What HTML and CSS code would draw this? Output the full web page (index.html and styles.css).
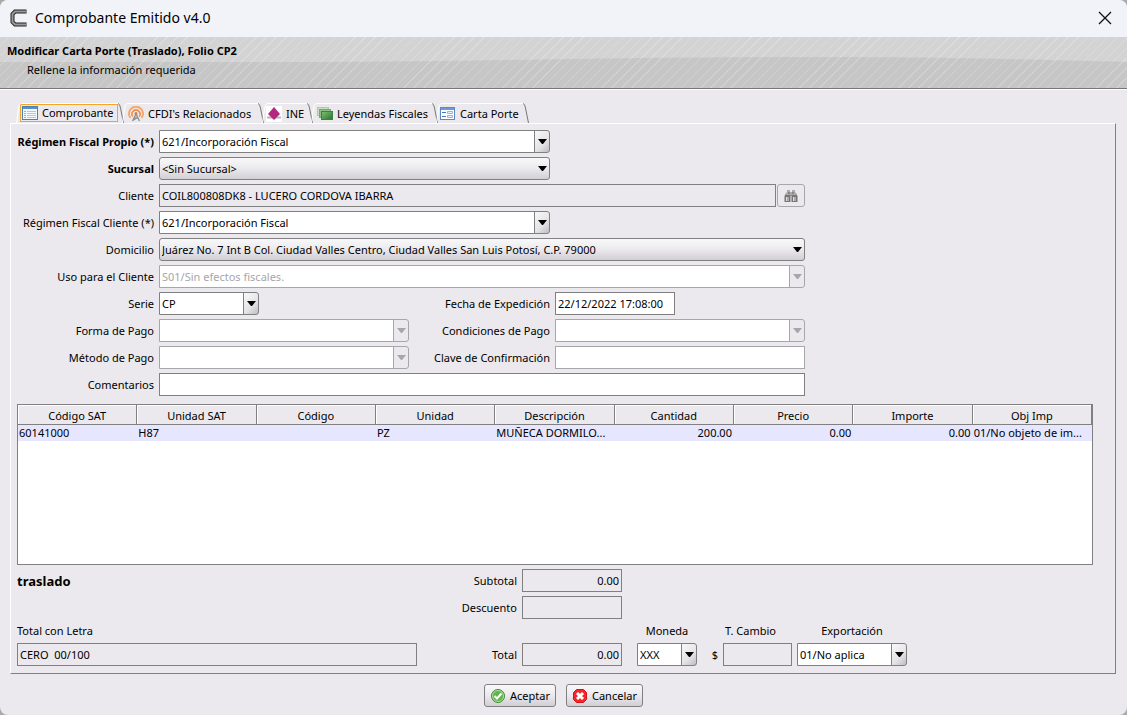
FILE: index.html
```
<!DOCTYPE html>
<html lang="es">
<head>
  <meta charset="UTF-8" />
  <meta name="viewport" content="width=device-width, initial-scale=1.0"/>
  <title>Comprobante Emitido v4.0</title>
  <link rel="stylesheet" href="styles.css">
</head>
<body>

  <div class="window">
    <header class="title-bar">
      <svg class="app-icon" width="18" height="18" viewBox="0 0 18 18" fill="none">
        <path d="M16.500 2.500H5L2.500 5V13L5 15.500H16.500" stroke="#222" stroke-width="4"/>
        <path d="M16 2.500H5L2.500 5V13L5 15.500H16" stroke="#999" stroke-width="2"/>
      </svg>
      <h1>Comprobante Emitido v4.0</h1>
      <button class="close" type="button" aria-label="Cerrar">
        <svg width="14" height="14" viewBox="0 0 14 14"><path d="M1 1L13 13M13 1L1 13" stroke="#111" stroke-width="1.300"/></svg>
      </button>
    </header>

    <div class="banner">
      <svg class="banner-wave" viewBox="0 0 1125 51" preserveAspectRatio="none">
        <path d="M0 25H300C500 24 650 20 800 20S1000 22 1125 25V51H0Z" fill="#c6c6c6"/>
      </svg>
      <h2>Modificar Carta Porte (Traslado), Folio CP2</h2>
      <p>Rellene la información requerida</p>
    </div>

    <main>
      <nav class="tabs" role="tablist">
        <button class="tab active" type="button" role="tab" aria-selected="true">
          <span class="focus">
            <svg width="16" height="16" viewBox="0 0 16 16">
              <rect x="0.500" y="1.500" width="15" height="13" fill="#f4f9fd" stroke="#4a7fb8"/>
              <path d="M1 3H15" stroke="#5b8fd0" stroke-width="2"/>
              <path d="M2 6.500H4M2 8.500H4M2 10.500H4M2 12.500H4" stroke="#7db4e6"/>
              <path d="M5 6.500H14M5 8.500H14M5 10.500H14M5 12.500H14" stroke="#b4c6cf"/>
            </svg>
            Comprobante
          </span>
        </button>
        <button class="tab tab-related" type="button" role="tab">
          <svg width="16" height="16" viewBox="0 0 16 16" fill="none">
            <path d="M2.500 12A7 7 0 1 1 13.500 12" stroke="#f6a86f" stroke-width="2"/>
            <path d="M4.800 10.500A4 4 0 1 1 11.200 10.500" stroke="#f28d4c" stroke-width="1.600"/>
            <circle cx="8" cy="7.500" r="1.500" fill="#e87532"/>
            <path d="M8 8L4.500 15M8 8L11.500 15M6 12H10M5.500 14L9.500 11.500" stroke="#929292" stroke-width="1.400"/>
          </svg>
          CFDI's Relacionados
        </button>
        <button class="tab tab-ine" type="button" role="tab">
          <svg width="16" height="16" viewBox="0 0 16 16">
            <rect width="16" height="16" fill="#fff"/>
            <path d="M1 11.500H15" stroke="#b9b3b8" stroke-width="2"/>
            <path d="M8 1L14 8L8 14L2 8Z" fill="#b5277f"/>
          </svg>
          INE
        </button>
        <button class="tab tab-legends" type="button" role="tab">
          <svg width="16" height="16" viewBox="0 0 16 16">
            <defs><linearGradient id="green" x1="0" y1="0" x2="1" y2="1"><stop stop-color="#82c077"/><stop offset="1" stop-color="#28722c"/></linearGradient></defs>
            <rect x="0.500" y="1.500" width="11" height="8" fill="#c8dfc5" stroke="#a9cda6"/>
            <rect x="2.500" y="3.500" width="11" height="8" fill="#8fbd8a" stroke="#74aa70"/>
            <rect x="4.500" y="5.500" width="11" height="8" fill="url(#green)" stroke="#3c8140"/>
          </svg>
          Leyendas Fiscales
        </button>
        <button class="tab tab-waybill" type="button" role="tab">
          <svg width="16" height="16" viewBox="0 0 16 16">
            <rect x="0.500" y="1.500" width="14" height="12" fill="#fff" stroke="#5c89c6"/>
            <path d="M1 3H14" stroke="#6b9bdc" stroke-width="2"/>
            <path d="M2 6.500H6M2 10.500H6" stroke="#4578b8"/>
            <path d="M7.500 5.500H12.500V7.500H7.500ZM7.500 9.500H12.500V11.500H7.500Z" fill="#eef" stroke="#9bb4d6"/>
          </svg>
          Carta Porte
        </button>
      </nav>

      <form class="pane" id="comprobante">
        <div class="fields">
          <label class="bold" for="regimen">Régimen Fiscal Propio (*)</label>
          <select class="combo medium" id="regimen"><option>621/Incorporación Fiscal</option></select>

          <label class="bold" for="sucursal">Sucursal</label>
          <select class="combo solid medium" id="sucursal"><option>&lt;Sin Sucursal&gt;</option></select>

          <label for="cliente">Cliente</label>
          <div class="with-button wide">
            <input type="text" id="cliente" value="COIL800808DK8 - LUCERO CORDOVA IBARRA" readonly />
            <button class="search" type="button" aria-label="Buscar cliente" disabled>
              <svg width="14" height="14" viewBox="0 0 14 14">
                <path d="M3 1H6V3H8V1H11V3L13 5V7H1V5L3 3Z" fill="#aaa"/>
                <path d="M1 6H6.500V13H0.500V7ZM7.500 6H13L13.500 7V13H7.500Z" fill="#777"/>
                <path d="M2 8H3.500V12H2ZM9 8H10.500V12H9Z" fill="#ddd"/>
                <path d="M4.500 8V12M11.500 8V12" stroke="#aaa"/>
                <path d="M4 4H6M8 4H10" stroke="#666"/>
              </svg>
            </button>
          </div>

          <label for="regimen-cliente">Régimen Fiscal Cliente (*)</label>
          <select class="combo medium" id="regimen-cliente"><option>621/Incorporación Fiscal</option></select>

          <label for="domicilio">Domicilio</label>
          <select class="combo solid wide" id="domicilio"><option>Juárez No. 7 Int B Col. Ciudad Valles Centro, Ciudad Valles San Luis Potosí, C.P. 79000</option></select>

          <label for="uso">Uso para el Cliente</label>
          <select class="combo wide" id="uso" disabled><option>S01/Sin efectos fiscales.</option></select>

          <label for="serie">Serie</label>
          <select class="combo serie" id="serie"><option>CP</option></select>
          <label for="fecha">Fecha de Expedición</label>
          <input class="fecha" type="text" id="fecha" value="22/12/2022 17:08:00" />

          <label for="forma">Forma de Pago</label>
          <select class="combo" id="forma" disabled></select>
          <label for="condiciones">Condiciones de Pago</label>
          <select class="combo" id="condiciones" disabled></select>

          <label for="metodo">Método de Pago</label>
          <select class="combo" id="metodo" disabled></select>
          <label for="clave">Clave de Confirmación</label>
          <input type="text" id="clave" disabled />

          <label for="comentarios">Comentarios</label>
          <input class="wide" type="text" id="comentarios" />
        </div>

        <div class="table-box">
          <table>
            <thead>
              <tr>
                <th>Código SAT</th>
                <th>Unidad SAT</th>
                <th>Código</th>
                <th>Unidad</th>
                <th>Descripción</th>
                <th>Cantidad</th>
                <th>Precio</th>
                <th>Importe</th>
                <th>Obj Imp</th>
              </tr>
            </thead>
            <tbody>
              <tr>
                <td>60141000</td>
                <td>H87</td>
                <td></td>
                <td>PZ</td>
                <td>MUÑECA DORMILO...</td>
                <td class="number">200.00</td>
                <td class="number">0.00</td>
                <td class="number">0.00</td>
                <td>01/No objeto de im...</td>
              </tr>
            </tbody>
          </table>
        </div>

        <div class="totals">
          <strong class="kind">traslado</strong>
          <label class="amount-label" for="subtotal">Subtotal</label>
          <input class="amount" type="text" id="subtotal" value="0.00" readonly />

          <label class="amount-label" for="descuento">Descuento</label>
          <input class="amount" type="text" id="descuento" readonly />

          <label class="words-label" for="letra">Total con Letra</label>
          <label class="currency-label" for="moneda">Moneda</label>
          <label class="rate-label" for="cambio">T. Cambio</label>
          <label class="export-label" for="exportacion">Exportación</label>

          <input class="words" type="text" id="letra" value="CERO  00/100" readonly />
          <label class="amount-label" for="total">Total</label>
          <input class="amount" type="text" id="total" value="0.00" readonly />
          <select class="combo currency" id="moneda"><option>XXX</option></select>
          <span class="sign">$</span>
          <input class="rate" type="text" id="cambio" readonly />
          <select class="combo export" id="exportacion"><option>01/No aplica</option></select>
        </div>
      </form>
    </main>

    <footer class="actions">
      <button class="action" type="submit" form="comprobante">
        <svg width="16" height="16" viewBox="0 0 16 16" fill="none">
          <circle cx="8" cy="8" r="6.500" fill="#62b44b" stroke="#3e8d37"/>
          <circle cx="8" cy="8" r="5.500" stroke="#b4dba5"/>
          <path d="M4.500 8L7 10.500L11.500 5.500" stroke="#fff" stroke-width="2"/>
        </svg>
        Aceptar
      </button>
      <button class="action" type="button">
        <svg width="16" height="16" viewBox="0 0 16 16">
          <path d="M4.500 1.500H11.500L14.500 4.500V11.500L11.500 14.500H4.500L1.500 11.500V4.500Z" fill="#f5262c" stroke="#d5141a"/>
          <path d="M5 5L11 11M11 5L5 11" stroke="#fff" stroke-width="3"/>
        </svg>
        Cancelar
      </button>
    </footer>
  </div>

</body>
</html>
```
FILE: styles.css
```
:root {
  --surface: #ebe9ed;
  --line: #808080;
  --line-soft: #a7a6aa;
  --arrow: url("data:image/svg+xml,%3Csvg xmlns='http://www.w3.org/2000/svg' width='9' height='5'%3E%3Cpath d='M0 0H9L5 5H4Z'/%3E%3C/svg%3E");
  --arrow-soft: url("data:image/svg+xml,%3Csvg xmlns='http://www.w3.org/2000/svg' width='9' height='5'%3E%3Cpath d='M0 0H9L5 5H4Z' fill='%23a7a6aa'/%3E%3C/svg%3E");
}

* {
  box-sizing: border-box;
  margin: 0;
  padding: 0;
}

body {
  font-family: "Noto Sans", "Open Sans", sans-serif;
  font-size: 11px;
  line-height: 16px;
  color: #000;
  background-color: #aaa;
}

input,
select,
button {
  font: inherit;
  color: inherit;
}

.window {
  display: flex;
  flex-direction: column;
  min-height: 100vh;
  background-color: var(--surface);
  border-radius: 8px;
  overflow: hidden;
}

/* Title bar and banner */
.title-bar {
  display: flex;
  align-items: center;
  gap: 7px;
  height: 37px;
  padding: 0 15px 2px 10px;
  background-color: #f1f3f9;
}

.title-bar h1 {
  flex: 1;
  font-size: 14px;
  font-weight: normal;
}

.close {
  display: flex;
  border: none;
  background: none;
}

.banner {
  position: relative;
  height: 53px;
  padding: 6px 7px;
  background-color: #d3d3d3;
  border-bottom: 1px solid #fff;
  box-shadow: inset 0 -1px #777;
}

.banner-wave {
  position: absolute;
  inset: 0;
  width: 100%;
  height: 51px;
}

.banner::before {
  content: "";
  position: absolute;
  inset: 0 0 1px;
  z-index: 1;
  background: repeating-linear-gradient(135deg, transparent 0 6px, rgba(255, 255, 255, 0.2) 6px 7px);
}

.banner h2,
.banner p {
  position: relative;
  z-index: 2;
}

.banner h2 {
  font-size: 11px;
}

.banner p {
  margin-top: 3px;
  padding-left: 20px;
}

main {
  padding: 13px 11px 0 10px;
}

/* Tabs */
.tabs {
  display: flex;
  height: 20px;
  padding-left: 6px;
}

.tab {
  position: relative;
  display: flex;
  align-items: center;
  gap: 4px;
  padding: 1px 0 0 6px;
  border: none;
  background: linear-gradient(#fff, #fff) 5px 0 / calc(100% - 9px) 1px no-repeat;
  white-space: nowrap;
}

.tab::before {
  content: "";
  position: absolute;
  left: 0;
  top: 0;
  width: 5px;
  height: 20px;
  background: url("data:image/svg+xml,%3Csvg xmlns='http://www.w3.org/2000/svg' width='5' height='20'%3E%3Cpath d='M5 .5Q3 1 2.500 6L.5 20' fill='none' stroke='white'/%3E%3C/svg%3E");
}

.tab::after {
  content: "";
  position: absolute;
  right: -2px;
  top: 0;
  width: 6px;
  height: 20px;
  background: url("data:image/svg+xml,%3Csvg xmlns='http://www.w3.org/2000/svg' width='6' height='20'%3E%3Cpath d='M0 .5Q2 1 2.500 5L5.500 20' fill='none' stroke='%23777'/%3E%3C/svg%3E");
}

.active {
  width: 106px;
  padding: 0 0 0 4px;
}

.focus {
  display: flex;
  align-items: center;
  gap: 4px;
  width: 98px;
  height: 18px;
  padding-left: 1px;
  border: 1px solid #f5a623;
}

.tab-related {
  width: 140px;
}

.tab-ine {
  width: 49px;
  padding-left: 4px;
}

.tab-legends {
  width: 125px;
}

.tab-waybill {
  width: 91px;
  padding-left: 4px;
}

.pane {
  padding: 6px 22px 7px 6px;
  border: 1px solid;
  border-color: #fff var(--line) var(--line) #fff;
}

/* Form controls */
input,
.combo {
  width: 100%;
  min-width: 0;
  height: 23px;
  padding: 0 2px;
  border: 1px solid var(--line);
  border-radius: 0;
  outline: none;
  background-color: #fff;
}

input[readonly] {
  background-color: var(--surface);
}

input:disabled {
  border-color: var(--line-soft);
}

.combo {
  appearance: none;
  padding-right: 16px;
  border-radius: 0 3px 3px 0;
  background:
    var(--arrow) right 2px top 8px no-repeat,
    linear-gradient(var(--line), var(--line)) right 14px top 0 / 1px 100% no-repeat,
    linear-gradient(135deg, #f8f8f9, #e4e3e6 60%, #bdbcc0) right / 14px 100% no-repeat,
    #fff;
}

.combo.solid {
  border-radius: 3px;
  background:
    var(--arrow) right 2px top 8px no-repeat,
    linear-gradient(#f8f8f9, #ebe9ed 50%, #d0cfd3);
}

.combo:disabled {
  opacity: 1;
  color: var(--line-soft);
  border-color: var(--line-soft);
  background:
    var(--arrow-soft) right 2px top 8px no-repeat,
    linear-gradient(var(--line-soft), var(--line-soft)) right 14px top 0 / 1px 100% no-repeat,
    linear-gradient(var(--surface), var(--surface)) right / 14px 100% no-repeat,
    #fff;
}

.fields {
  display: grid;
  grid-template-columns: 137px 250px 136px 250px;
  gap: 4px 5px;
  align-items: center;
}

.fields label {
  text-align: right;
  white-space: nowrap;
}

.fecha {
  width: 120px;
}

.bold {
  font-weight: bold;
}

.medium {
  grid-column: 2 / 4;
}

.wide {
  grid-column: 2 / 5;
}

.medium + label,
.wide + label {
  grid-column: 1;
}

.serie {
  width: 100px;
}

.with-button {
  display: flex;
  gap: 1px;
}

.search {
  display: flex;
  flex: none;
  align-items: center;
  justify-content: center;
  width: 28px;
  height: 23px;
  border: 1px solid var(--line-soft);
  border-radius: 3px;
  background-color: var(--surface);
}

/* Concept table */
.table-box {
  height: 161px;
  margin-top: 8px;
  border: 1px solid var(--line);
  background-color: #fff;
}

table {
  width: 100%;
  table-layout: fixed;
  border-collapse: separate;
  border-spacing: 0;
}

th {
  height: 20px;
  padding: 2px 0 0;
  font-weight: normal;
  line-height: 16px;
  background-color: var(--surface);
  border-right: 1px solid var(--line);
  border-bottom: 1px solid var(--line);
  box-shadow: inset 1px 1px #fff;
}

td {
  height: 16px;
  padding: 0 1px 1px;
  line-height: 14px;
  white-space: nowrap;
  overflow: hidden;
  background-color: #e6e6ff;
}

.number {
  padding-right: 2px;
  text-align: right;
}

/* Totals */
.totals {
  display: grid;
  grid-template-columns: 400px 95px 100px 5px 60px 16px 69px 110px;
  grid-template-rows: 23px 23px 16px 23px;
  gap: 4px 5px;
  align-items: center;
  margin-top: 4px;
}

.kind {
  font-size: 13px;
}

.amount-label {
  grid-column: 2;
  text-align: right;
}

.amount {
  grid-column: 3;
  text-align: right;
}

.words-label {
  grid-column: 1;
}

.currency,
.currency-label {
  grid-column: 5;
}

.rate,
.rate-label {
  grid-column: 7;
}

.export,
.export-label {
  grid-column: 8;
}

.currency-label,
.export-label {
  text-align: center;
}

.rate-label {
  padding-left: 2px;
}

.sign {
  text-align: right;
}

.words {
  white-space: pre;
}

/* Bottom buttons */
.actions {
  display: flex;
  justify-content: center;
  gap: 10px;
  padding: 10px 0 8px;
}

.action {
  display: flex;
  align-items: center;
  gap: 4px;
  height: 23px;
  padding: 0 5px;
  border: 1px solid var(--line);
  border-radius: 3px;
  background: linear-gradient(#f8f8f9, #ebe9ed 50%, #d0cfd3);
}
```
